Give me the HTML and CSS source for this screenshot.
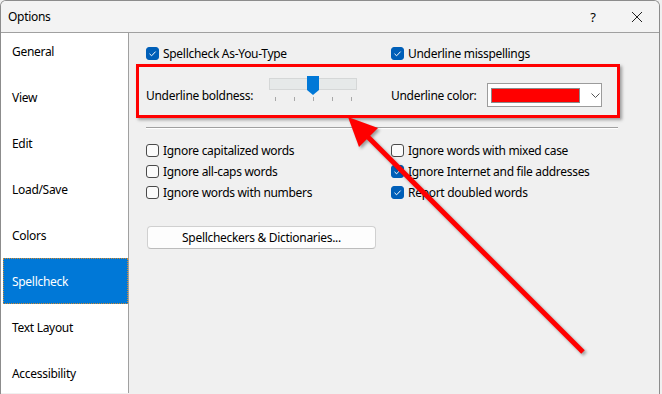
FILE: index.html
```html
<!DOCTYPE html>
<html>
<head>
<meta charset="utf-8">
<link rel="stylesheet" href="styles.css">
</head>
<body>
<div class="window">
  <div class="titlebar">
    <span class="title">Options</span>
    <span class="help">?</span>
    <span class="close"><svg width="12" height="12" viewBox="0 0 12 12"><path d="M1 1 L11 11 M11 1 L1 11" stroke="#222" stroke-width="1"/></svg></span>
  </div>
  <div class="main">
    <div class="nav">
      <ul class="navlist">
        <li>General</li>
        <li>View</li>
        <li>Edit</li>
        <li>Load/Save</li>
        <li>Colors</li>
        <li class="active">Spellcheck</li>
        <li>Text Layout</li>
        <li>Accessibility</li>
      </ul>
    </div>
    <div class="content">
      <div class="grid2">
        <label class="cb"><span class="box on"></span>Spellcheck As-You-Type</label>
        <label class="cb"><span class="box on"></span>Underline misspellings</label>
      </div>
      <div class="highlight">
        <span class="lbl lbl-bold">Underline boldness:</span>
        <div class="slider">
          <div class="track"></div>
          <div class="thumb"><svg width="12" height="19" viewBox="0 0 12 19"><path d="M0 0 H12 V14 L6 19 L0 14 Z" fill="#0078d7"/></svg></div>
          <div class="ticks"><i></i><i></i><i></i><i></i><i></i></div>
        </div>
        <span class="lbl lbl-color">Underline color:</span>
        <div class="dropdown">
          <span class="swatch"></span>
          <svg class="chev" width="9" height="5" viewBox="0 0 9 5"><path d="M0.5 0.5 L4.5 4.5 L8.5 0.5" fill="none" stroke="#555" stroke-width="1"/></svg>
        </div>
      </div>
      <div class="sep"></div>
      <div class="grid2 opts">
        <label class="cb"><span class="box"></span>Ignore capitalized words</label>
        <label class="cb"><span class="box"></span>Ignore words with mixed case</label>
        <label class="cb"><span class="box"></span>Ignore all-caps words</label>
        <label class="cb"><span class="box on"></span>Ignore Internet and file addresses</label>
        <label class="cb"><span class="box"></span>Ignore words with numbers</label>
        <label class="cb"><span class="box on"></span>Report doubled words</label>
      </div>
      <button class="btn">Spellcheckers &amp; Dictionaries...</button>
    </div>
  </div>
  <svg class="arrow" width="662" height="394" viewBox="0 0 662 394">
    <g class="arrow-g">
      <line x1="583" y1="352" x2="366" y2="135" stroke="#ff0000" stroke-width="5"/>
      <path d="M348 117 L378 128 L359 147 Z" fill="#ff0000"/>
    </g>
  </svg>
</div>
</body>
</html>
```

FILE: styles.css
```css
* { box-sizing: border-box; }
html, body { margin: 0; padding: 0; }
body {
  width: 662px;
  height: 394px;
  background: #f0f0f0;
  font-family: "Noto Sans", "Open Sans", sans-serif;
  font-size: 12px;
  letter-spacing: -0.3px;
  color: #000;
  overflow: hidden;
}
.window {
  position: relative;
  width: 660px;
  height: 394px;
  border: 1px solid #8c8c8c;
  border-bottom: none;
  border-radius: 6px 6px 0 0;
  background: #f0f0f0;
  overflow: hidden;
}
.titlebar {
  height: 32px;
  display: flex;
  align-items: center;
  background: #f3f3f3;
  border-bottom: 1px solid #a0a0a0;
  padding-left: 7px;
}
.title { flex: 1; font-size: 12px; }
.help { width: 20px; text-align: center; font-size: 13px; margin-right: 28px; }
.close { width: 14px; height: 12px; margin-right: 14px; display: flex; }
.main { display: flex; height: 360px; }
.nav {
  width: 128px;
  background: #fff;
  border-right: 1px solid #a0a0a0;
  overflow: hidden;
}
.navlist { list-style: none; margin: -5px 0 0 0; padding: 0 0 0 2px; }
.navlist li {
  height: 46px;
  display: flex;
  align-items: center;
  padding-left: 8px;
  border: 1px solid transparent;
}
.navlist li.active {
  background: #0078d7;
  color: #fff;
  border: 1px dotted #d08a30;
}
.content { flex: 1; padding: 10px 0 0 17px; }
.grid2 { display: grid; grid-template-columns: 245px auto; }
.cb { display: flex; align-items: center; height: 21px; white-space: nowrap; }
.box {
  width: 13px; height: 13px;
  border: 1px solid #4a4a4a;
  border-radius: 3px;
  background: #fbfbfb;
  margin-right: 4px;
  flex: none;
}
.box.on {
  border-color: #005fb8;
  background: #005fb8 url("data:image/svg+xml;utf8,<svg xmlns='http://www.w3.org/2000/svg' width='11' height='11' viewBox='0 0 11 11'><path d='M2.5 5.8 L4.6 7.8 L8.6 3.6' fill='none' stroke='white' stroke-width='1'/></svg>") no-repeat center;
}
.highlight {
  width: 484px;
  height: 54px;
  margin-left: -10px;
  border: 3px solid #ff0000;
  box-shadow: 2px 2px 3px rgba(0,0,0,0.35);
  display: flex;
  align-items: flex-start;
  padding-left: 7px;
}
.lbl { margin-top: 21px; line-height: 16px; white-space: nowrap; }
.lbl-bold { width: 123px; }
.lbl-color { width: 96px; margin-left: 34px; }
.slider { position: relative; width: 88px; padding-top: 11px; }
.track { height: 12px; background: #e6e9e9; border: 1px solid #d5d7d7; }
.thumb { position: absolute; left: 38px; top: 9px; display: flex; }
.ticks { display: flex; justify-content: space-between; padding: 7px 5px 0 6px; }
.ticks i { display: block; width: 1px; height: 4px; background: #a8a8a8; }
.dropdown {
  margin-top: 16px;
  width: 115px; height: 24px;
  background: #fff;
  border: 1px solid #9c9c9c;
  display: flex; align-items: center;
  padding-left: 3px;
}
.swatch { width: 89px; height: 15px; background: #ff0000; border: 1px solid #8a8a8a; }
.chev { margin-left: 11px; }
.sep {
  width: 472px;
  height: 2px;
  margin-top: 9px;
  border-top: 1px solid #a0a0a0;
  border-bottom: 1px solid #fff;
}
.opts { margin-top: 11px; }
.btn {
  display: block;
  margin: 23px 0 0 1px;
  width: 229px; height: 23px;
  background: #fdfdfd;
  border: 1px solid #d0d0d0;
  border-bottom-color: #bcbcbc;
  border-radius: 4px;
  font-family: inherit;
  font-size: 12px;
  letter-spacing: -0.3px;
  color: #000;
  padding: 0;
}
.arrow { position: absolute; left: -1px; top: -1px; pointer-events: none; }
.arrow-g { filter: drop-shadow(2px 2px 1.5px rgba(0,0,0,0.35)); }
```
